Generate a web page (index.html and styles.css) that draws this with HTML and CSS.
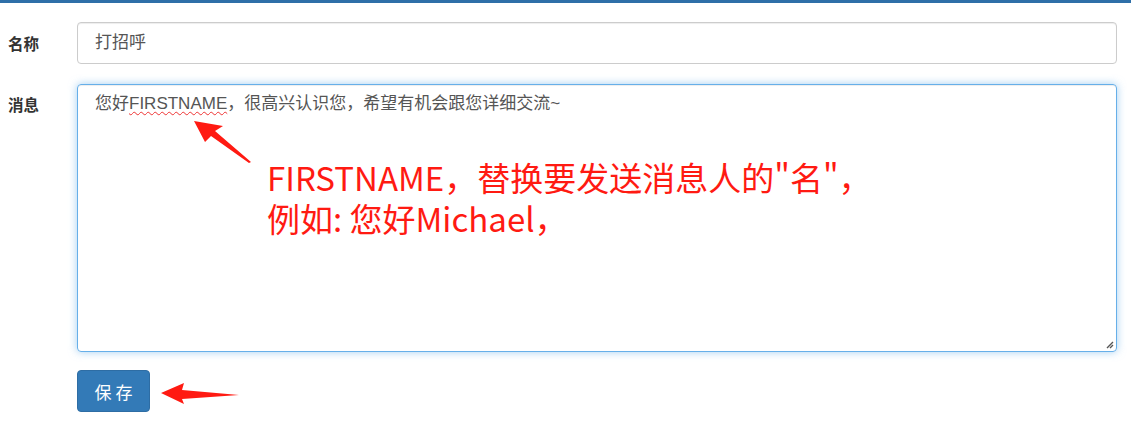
FILE: index.html
```html
<!DOCTYPE html>
<html lang="zh">
<head>
<meta charset="utf-8">
<link rel="stylesheet" href="styles.css">
</head>
<body>
<div class="topbar"></div>
<form class="form">
  <div class="row">
    <label class="label">名称</label>
    <div class="control input">打招呼</div>
  </div>
  <div class="row row-msg">
    <label class="label">消息</label>
    <div class="control textarea">您好<span class="spell">FIRSTNAME</span>，很高兴认识您，希望有机会跟您详细交流~
      <svg class="grip" width="10" height="10" viewBox="0 0 10 10"><path d="M9 3 L3 9 M9 6 L6 9" stroke="#555" stroke-width="1.4"/></svg>
    </div>
  </div>
  <div class="row row-btn">
    <div></div>
    <div><button type="button" class="btn">保存</button></div>
  </div>
</form>
<div class="note"><div>FIRSTNAME，替换要发送消息人的"名"，</div><div>例如: 您好Michael，</div></div>
<svg class="arrow a1" width="1131" height="440" viewBox="0 0 1131 440">
  <polygon fill="#ff1a12" points="194,121 223,126 215,131 251,162 249,163 211,136 205,142"/>
  <polygon fill="#ff1a12" points="161,393 184,383 182,390 239,395 182,399 184,404"/>
</svg>
</body>
</html>
```
FILE: styles.css
```css
html, body { margin: 0; padding: 0; background: #fff; }
body {
  font-family: "Liberation Sans", "Noto Sans CJK SC", sans-serif;
  font-size: 14px;
  color: #555;
  width: 1131px;
  height: 440px;
  overflow: hidden;
  position: relative;
}
.topbar { height: 3px; background: #2f6fa8; }
.form { padding: 19px 14px 0 8px; display: flex; flex-direction: column; gap: 20px; }
.row { display: grid; grid-template-columns: 69px 1fr; }
.label {
  font-family: "Noto Sans CJK SC", sans-serif;
  font-weight: bold;
  color: #333;
  font-size: 15.5px;
  line-height: 42px;
}
.row-msg .label { line-height: 40px; }
.control {
  box-sizing: border-box;
  border: 1px solid #ccc;
  border-radius: 4px;
  padding: 0 17px;
  color: #555;
  font-size: 17px;
}
.input { height: 42px; line-height: 40px; box-shadow: inset 0 1px 1px rgba(0,0,0,.075); }
.textarea {
  position: relative;
  height: 268px;
  padding-top: 6px;
  line-height: 26px;
  border-color: #66afe9;
  box-shadow: inset 0 1px 1px rgba(0,0,0,.075), 0 0 8px rgba(102,175,233,.6);
}
.spell {
  text-decoration: underline wavy #e33;
  text-decoration-thickness: 1px;
  text-underline-offset: 2px;
}
.grip { position: absolute; right: 2px; bottom: 2px; }
.row-btn { margin-top: -2px; }
.btn {
  width: 73px;
  height: 42px;
  border: 1px solid #2e6da4;
  background: #337ab7;
  color: #fff;
  border-radius: 4px;
  font-family: "Noto Sans CJK SC", sans-serif;
  font-size: 17px;
  letter-spacing: 4px;
  padding: 0 0 0 4px;
}
.note {
  position: absolute;
  left: 267px;
  top: 157px;
  color: #ff1a12;
  font-family: "Noto Sans CJK SC", sans-serif;
  font-size: 33px;
  line-height: 40px;
  display: flex;
  flex-direction: column;
  gap: 1px;
}
.arrow { position: absolute; left: 0; top: 0; pointer-events: none; }
```
